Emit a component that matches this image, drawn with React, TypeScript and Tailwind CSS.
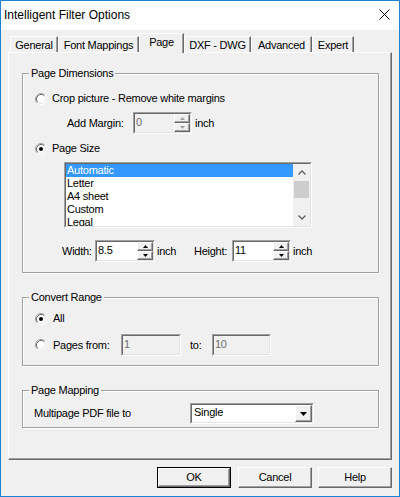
import React from "react";

function Radio({ checked }: { checked?: boolean }) {
  return (
    <svg width="12" height="12" viewBox="0 0 12 12" className="shrink-0">
      <circle cx="6" cy="6" r="5.5" fill="#fff" />
      <path d="M2.11 9.89 A5.5 5.5 0 0 1 9.89 2.11" fill="none" stroke="#a0a0a0" strokeWidth="1" />
      <path d="M9.89 2.11 A5.5 5.5 0 0 1 2.11 9.89" fill="none" stroke="#ffffff" strokeWidth="1" />
      <path d="M2.82 9.18 A4.5 4.5 0 0 1 9.18 2.82" fill="none" stroke="#696969" strokeWidth="1" />
      <path d="M9.18 2.82 A4.5 4.5 0 0 1 2.82 9.18" fill="none" stroke="#e3e3e3" strokeWidth="1" />
      {checked && <circle cx="6" cy="6" r="2" fill="#000" />}
    </svg>
  );
}

function Spin({ disabled }: { disabled?: boolean }) {
  const c = disabled ? "#a0a0a0" : "#000";
  return (
    <div className="flex flex-col w-[16px] h-full shrink-0">
      <div className="flex-1 flex items-center justify-center bg-[#f0f0f0] border border-t-white border-l-white border-r-[#696969] border-b-[#696969] shadow-[inset_-1px_-1px_0_#a0a0a0]">
        <svg width="5" height="3" viewBox="0 0 5 3"><path d="M2.5 0 L5 3 L0 3 Z" fill={c} /></svg>
      </div>
      <div className="flex-1 flex items-center justify-center bg-[#f0f0f0] border border-t-white border-l-white border-r-[#696969] border-b-[#696969] shadow-[inset_-1px_-1px_0_#a0a0a0]">
        <svg width="5" height="3" viewBox="0 0 5 3"><path d="M0 0 L5 0 L2.5 3 Z" fill={c} /></svg>
      </div>
    </div>
  );
}

function Field({
  width,
  value,
  disabled,
  spin,
}: {
  width: string;
  value: string;
  disabled?: boolean;
  spin?: boolean;
}) {
  return (
    <div className={`${width} h-[22px] shrink-0 border border-t-[#a0a0a0] border-l-[#a0a0a0] border-r-white border-b-white`}>
      <div
        className={`flex h-full border border-t-[#696969] border-l-[#696969] border-r-[#e3e3e3] border-b-[#e3e3e3] ${
          disabled ? "bg-[#f0f0f0] text-[#6d6d6d]" : "bg-white text-black"
        }`}
      >
        <div className="flex-1 pl-[1px] pt-[1px] leading-[14px]">{value}</div>
        {spin && <Spin disabled={disabled} />}
      </div>
    </div>
  );
}

function Group({ title, height, children }: { title: string; height: string; children: React.ReactNode }) {
  return (
    <div
      className={`relative ml-[13px] w-[357px] ${height} border border-[#a0a0a0] shadow-[inset_1px_1px_0_#fff,1px_1px_0_#fff] flex flex-col`}
    >
      <span className="absolute -top-[8px] left-[6px] px-[2px] bg-[#f0f0f0] leading-[14px]">{title}</span>
      {children}
    </div>
  );
}

function Tab({ label, width, selected }: { label: string; width: string; selected?: boolean }) {
  return (
    <div
      className={`${width} ${
        selected ? "h-[20px] -mb-[1px] relative z-10 pb-[2px]" : "h-[16px] pt-[1px]"
      } shrink-0 flex items-center justify-center bg-[#f0f0f0] border-l border-t border-r border-l-white border-t-white border-r-[#696969] shadow-[inset_-1px_0_0_#a0a0a0] rounded-tl-[2px] leading-[13px]`}
    >
      {label}
    </div>
  );
}

function Button({ label, def }: { label: string; def?: boolean }) {
  return (
    <div className={`w-[74px] h-[21px] ${def ? "border border-black" : ""}`}>
      <div className="w-full h-full flex items-center justify-center bg-[#f0f0f0] border border-t-white border-l-white border-r-[#696969] border-b-[#696969] shadow-[inset_-1px_-1px_0_#a0a0a0] leading-[13px]">
        {label}
      </div>
    </div>
  );
}

export default function App() {
  return (
    <div className="w-[400px] h-[497px] border border-[#1883d7] bg-[#f0f0f0] flex flex-col overflow-hidden font-['Liberation_Sans',Arial,sans-serif] text-[11px] tracking-[-0.25px] text-black">
      {/* Title bar */}
      <div className="h-[29px] shrink-0 bg-white flex items-center justify-between pl-[3px] pr-[9px]">
        <span className="text-[12px] tracking-normal pb-[2px]">Intelligent Filter Options</span>
        <svg width="11" height="11" viewBox="0 0 11 11" className="mb-[3px]">
          <path d="M0.5 0.5 L10.5 10.5 M10.5 0.5 L0.5 10.5" stroke="#000" strokeWidth="1" />
        </svg>
      </div>

      {/* Tabs */}
      <div className="pt-[3px] pl-[9px] h-[22px] shrink-0 flex items-end">
        <Tab label="General" width="w-[48px]" />
        <Tab label="Font Mappings" width="w-[81px]" />
        <Tab label="Page" width="w-[45px]" selected />
        <Tab label="DXF - DWG" width="w-[67px]" />
        <Tab label="Advanced" width="w-[61px]" />
        <Tab label="Expert" width="w-[42px]" />
      </div>

      {/* Panel */}
      <div className="ml-[7px] w-[384px] h-[408px] shrink-0 border border-t-white border-l-white border-r-[#696969] border-b-[#696969] shadow-[inset_-1px_-1px_0_#a0a0a0] flex flex-col pt-[20px]">
        <Group title="Page Dimensions" height="h-[200px]">
          <div className="mt-[18px] pl-[12px] h-[13px] flex items-center gap-[5px]">
            <Radio />
            <span className="leading-[13px]">Crop picture - Remove white margins</span>
          </div>
          <div className="mt-[7px] pl-[44px] h-[22px] flex items-center">
            <span className="w-[66px] shrink-0">Add Margin:</span>
            <Field width="w-[59px]" value="0" disabled spin />
            <span className="ml-[3px]">inch</span>
          </div>
          <div className="mt-[8px] pl-[12px] h-[13px] flex items-center gap-[5px]">
            <Radio checked />
            <span className="leading-[13px]">Page Size</span>
          </div>
          <div className="mt-[7px] ml-[41px] w-[248px] h-[66px] border border-t-[#a0a0a0] border-l-[#a0a0a0] border-r-white border-b-white">
            <div className="h-full flex border border-t-[#696969] border-l-[#696969] border-r-[#e3e3e3] border-b-[#e3e3e3] bg-white">
              <div className="flex-1 overflow-hidden leading-[13px] flex flex-col">
                <div className="h-[13px] shrink-0 bg-[#3399ff] text-white pl-[1px]">Automatic</div>
                <div className="h-[13px] shrink-0 pl-[1px]">Letter</div>
                <div className="h-[13px] shrink-0 pl-[1px]">A4 sheet</div>
                <div className="h-[13px] shrink-0 pl-[1px]">Custom</div>
                <div className="h-[13px] shrink-0 pl-[1px]">Legal</div>
              </div>
              <div className="w-[17px] shrink-0 bg-[#f0f0f0] flex flex-col">
                <div className="h-[17px] flex items-center justify-center">
                  <svg width="8" height="5" viewBox="0 0 8 5"><path d="M0.5 4.5 L4 1 L7.5 4.5" fill="none" stroke="#606060" strokeWidth="1.3" /></svg>
                </div>
                <div className="h-[17px] mx-[1px] bg-[#cdcdcd]" />
                <div className="flex-1" />
                <div className="h-[17px] flex items-center justify-center">
                  <svg width="8" height="5" viewBox="0 0 8 5"><path d="M0.5 0.5 L4 4 L7.5 0.5" fill="none" stroke="#606060" strokeWidth="1.3" /></svg>
                </div>
              </div>
            </div>
          </div>
          <div className="mt-[12px] ml-[39px] h-[22px] flex items-center">
            <span className="w-[33px] shrink-0">Width:</span>
            <Field width="w-[60px]" value="8.5" spin />
            <span className="ml-[2px] w-[37px] shrink-0">inch</span>
            <span className="w-[38px] shrink-0">Height:</span>
            <Field width="w-[59px]" value="11" spin />
            <span className="ml-[2px]">inch</span>
          </div>
        </Group>

        <div className="h-[24px] shrink-0" />

        <Group title="Convert Range" height="h-[69px]">
          <div className="mt-[14px] pl-[12px] h-[13px] flex items-center gap-[6px]">
            <Radio checked />
            <span className="leading-[13px]">All</span>
          </div>
          <div className="mt-[9px] pl-[12px] h-[22px] flex items-center">
            <Radio />
            <span className="ml-[6px] w-[68px] shrink-0">Pages from:</span>
            <Field width="w-[60px]" value="1" disabled />
            <span className="ml-[9px] w-[22px] shrink-0">to:</span>
            <Field width="w-[59px]" value="10" disabled />
          </div>
        </Group>

        <div className="h-[24px] shrink-0" />

        <Group title="Page Mapping" height="h-[38px]">
          <div className="mt-[12px] pl-[11px] h-[21px] flex items-center">
            <span className="w-[156px] shrink-0">Multipage PDF file to</span>
            <div className="w-[124px] h-[21px] shrink-0 border border-t-[#a0a0a0] border-l-[#a0a0a0] border-r-white border-b-white">
              <div className="h-full flex border border-t-[#696969] border-l-[#696969] border-r-[#e3e3e3] border-b-[#e3e3e3] bg-white">
                <div className="flex-1 pl-[2px] leading-[15px]">Single</div>
                <div className="w-[17px] shrink-0 flex items-center justify-center bg-[#f0f0f0] border border-t-white border-l-white border-r-[#696969] border-b-[#696969] shadow-[inset_-1px_-1px_0_#a0a0a0]">
                  <svg width="7" height="4" viewBox="0 0 7 4"><path d="M0 0 L7 0 L3.5 4 Z" fill="#000" /></svg>
                </div>
              </div>
            </div>
          </div>
        </Group>
      </div>

      {/* Buttons */}
      <div className="mt-[7px] flex justify-end pr-[7px] gap-[7px]">
        <Button label="OK" def />
        <div className="flex gap-[6px]">
          <Button label="Cancel" />
          <Button label="Help" />
        </div>
      </div>
    </div>
  );
}
